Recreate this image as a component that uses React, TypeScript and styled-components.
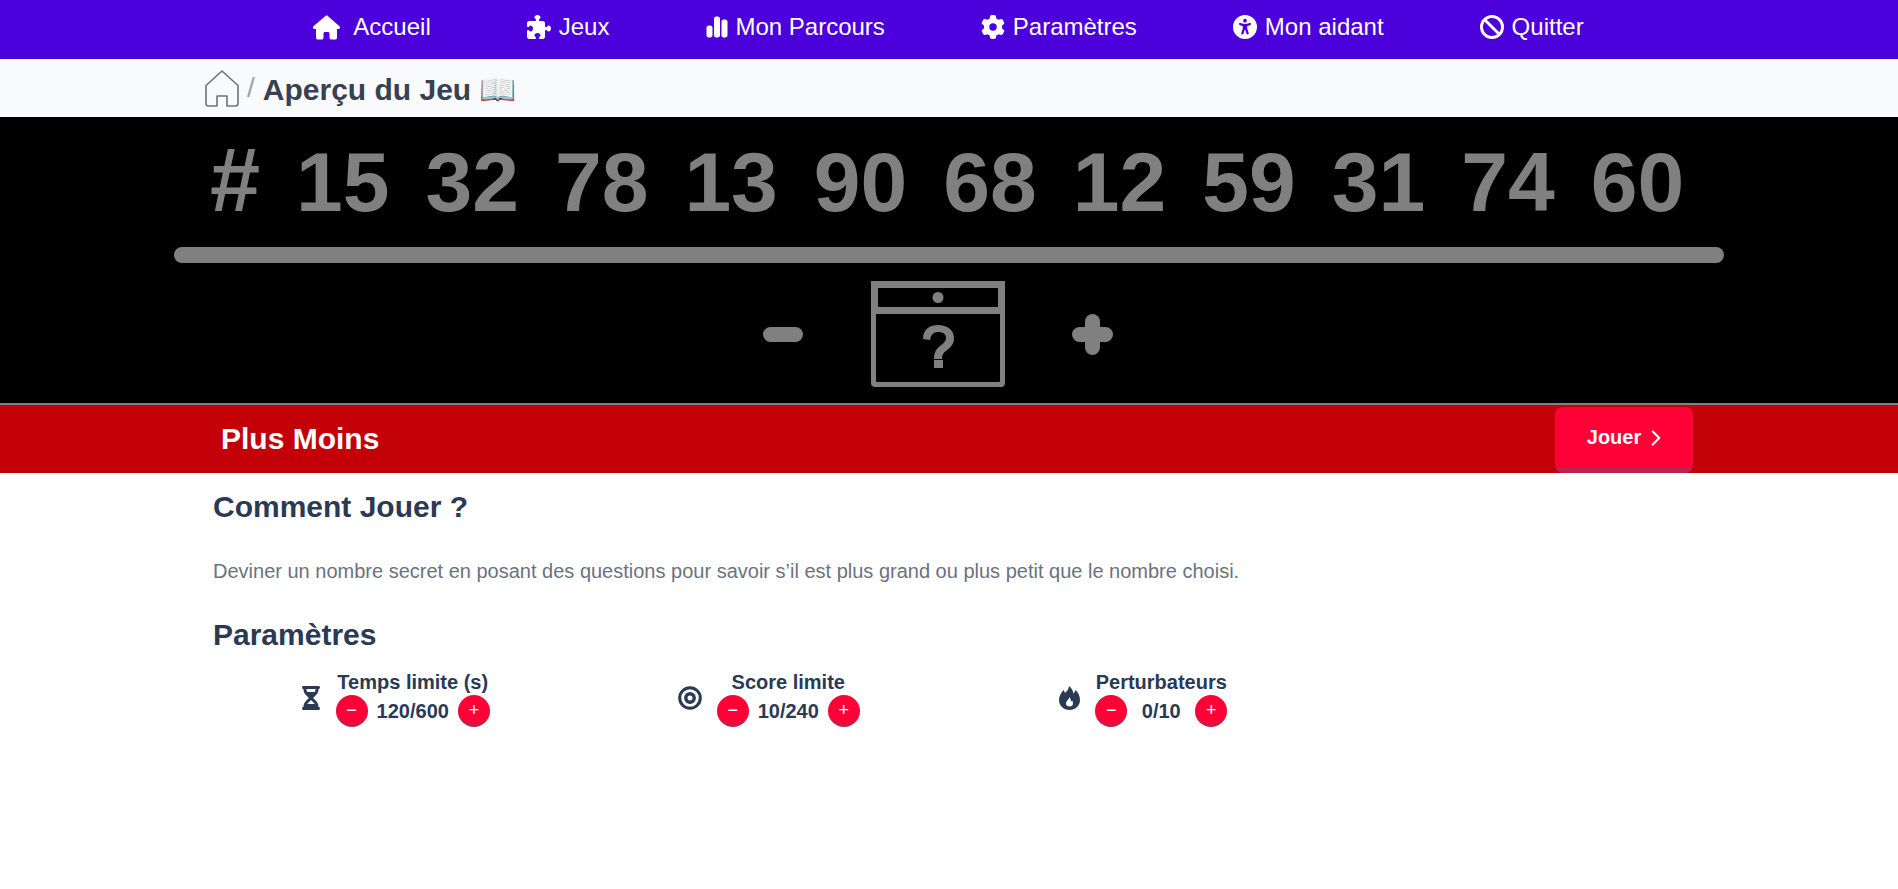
import React from "react";
import styled, { createGlobalStyle } from "styled-components";
import {
  FaBan,
  FaChartSimple,
  FaGear,
  FaHouse,
  FaHourglassHalf,
  FaPuzzlePiece,
  FaUniversalAccess,
} from "react-icons/fa6";
import { LuChevronRight } from "react-icons/lu";

const GlobalStyle = createGlobalStyle`
  * {
    box-sizing: border-box;
  }

  body {
    margin: 0;
    background: #ffffff;
    font-family: "Liberation Sans", Arial, sans-serif;
  }
`;

const Nav = styled.nav`
  display: flex;
  justify-content: center;
  gap: 96px;
  height: 59px;
  padding: 15px 1px 0 0;
  background: #4c00dc;
`;

const NavItem = styled.a<{ $gap?: number }>`
  display: flex;
  align-items: center;
  gap: ${(p) => p.$gap ?? 8}px;
  height: 24px;
  color: #ffffff;
  font-size: 24px;
  line-height: 24px;
`;

const Breadcrumb = styled.div`
  display: flex;
  align-items: center;
  height: 58px;
  padding-left: 205px;
  background: #f9fafb;
`;

const Slash = styled.span`
  margin: 0 8px;
  color: #9ca3af;
  font-size: 28px;
`;

const PageTitle = styled.h1`
  margin: 2px 0 0;
  color: #374151;
  font-size: 30px;
  font-weight: 700;
`;

const Preview = styled.section`
  display: flex;
  flex-direction: column;
  align-items: center;
  height: 288px;
  padding-top: 13px;
  background: #000000;
  border-bottom: 2px solid #808080;
  color: #808080;
`;

const Numbers = styled.div`
  height: 100px;
  padding-right: 4px;
  font-size: 84px;
  font-weight: 700;
  line-height: 100px;
  white-space: pre;
  word-spacing: 12.7px;
`;

const Hash = styled.span`
  font-size: 90px;
`;

const Bar = styled.div`
  width: 1550px;
  height: 16px;
  margin-top: 17px;
  border-radius: 8px;
  background: #808080;
`;

const Controls = styled.div`
  display: flex;
  align-items: center;
  margin-top: 18px;
  padding-right: 22px;
`;

const Hero = styled.div`
  display: flex;
  align-items: center;
  justify-content: space-between;
  height: 68px;
  padding: 0 205px 0 221px;
  background: #c30007;
`;

const HeroTitle = styled.h2`
  margin: 0;
  color: #ffffff;
  font-size: 30px;
  font-weight: 700;
`;

const PlayButton = styled.button`
  display: flex;
  align-items: center;
  justify-content: center;
  gap: 2px;
  width: 138px;
  height: 66px;
  margin-top: 2px;
  padding: 0 0 0 8px;
  border: 0;
  border-bottom: 5px solid #b9234e;
  border-radius: 8px;
  background: #ff0037;
  color: #ffffff;
  font-family: inherit;
  font-size: 20px;
  font-weight: 700;
`;

const Content = styled.main`
  padding: 16px 213px 0;
`;

const Heading = styled.h2`
  margin: 0;
  color: #2a3a55;
  font-size: 30px;
  font-weight: 700;
  line-height: 36px;
`;

const Description = styled.p`
  margin: 32px 0 32px;
  color: #6b7280;
  font-size: 20px;
  line-height: 28px;
`;

const SettingsGrid = styled.div`
  display: grid;
  grid-template-columns: repeat(4, 374.5px);
  margin: 16px 0 0 -6px;
`;

const Setting = styled.div<{ $gap: number }>`
  display: flex;
  align-items: center;
  justify-content: center;
  gap: ${(p) => p.$gap}px;
  color: #2a3a55;
`;

const SettingBody = styled.div`
  display: flex;
  flex-direction: column;
  align-items: center;
`;

const SettingLabel = styled.div`
  font-size: 20px;
  font-weight: 700;
  line-height: 26px;
`;

const Stepper = styled.div`
  display: flex;
  align-items: center;
`;

const StepButton = styled.button`
  display: flex;
  align-items: center;
  justify-content: center;
  width: 32px;
  height: 32px;
  padding: 2px 0 0;
  border: 0;
  border-bottom: 3px solid #b9234e;
  border-radius: 50%;
  background: #ff0037;
  color: #ffffff;
  font-family: inherit;
  font-size: 18px;
`;

const StepValue = styled.span`
  min-width: 50px;
  margin: 0 9px;
  font-size: 20px;
  font-weight: 700;
  text-align: center;
`;

const HomeOutline = () => (
  <svg width="34" height="37" viewBox="0 0 34 37" fill="none" stroke="#6b7280" strokeWidth="1.6" strokeLinejoin="round">
    <path d="M17 1 L33 15.5 V33.5 Q33 36 30.5 36 H22 V26 H12 V36 H3.5 Q1 36 1 33.5 V15.5 Z" />
  </svg>
);

const MinusShape = () => (
  <svg width="40" height="15" viewBox="0 0 40 15">
    <rect width="40" height="15" rx="7.5" fill="#808080" />
  </svg>
);

const PlusShape = () => (
  <svg width="41" height="41" viewBox="0 0 41 41">
    <rect y="13" width="41" height="15" rx="7.5" fill="#808080" />
    <rect x="13" width="15" height="41" rx="7.5" fill="#808080" />
  </svg>
);

const MysteryBox = () => (
  <svg width="134" height="106" viewBox="0 0 134 106" style={{ margin: "0 67px 0 68px" }}>
    <path
      fill="#808080"
      fillRule="evenodd"
      d="M0 0 H134 V102 Q134 106 130 106 H4 Q0 106 0 102 Z M7 7 V26 H127 V7 Z M5 33 V100 Q5 101 6 101 H128 Q129 101 129 100 V33 Z"
    />
    <circle cx="67" cy="16.5" r="5.5" fill="#808080" />
    <path
      fill="#808080"
      d="M52 58 C52 48 59 44 67 44 C76 44 83 49 83 57 C83 63 80 66 75 70 C72 72 71 74 71 78 H63 C63 73 64 69 69 65 C73 62 75 60 75 57 C75 53 72 51 67 51 C63 51 60 53 59 59 Z M63 79 H72 V87 H63 Z"
    />
  </svg>
);

const TargetRings = () => (
  <svg width="24" height="24" viewBox="0 0 24 24" fill="none" stroke="currentColor">
    <circle cx="12" cy="12" r="10.3" strokeWidth="3" />
    <circle cx="12" cy="12" r="4.2" strokeWidth="3.4" />
  </svg>
);

const FlameIcon = () => (
  <svg width="21" height="24" viewBox="0 0 21 24">
    <path
      fill="currentColor"
      fillRule="evenodd"
      d="M10 0 C10 3 8 5 6 7 C5.5 5.5 5 4.5 4.5 4 C2 7 0 10 0 14 C0 20 5 24 10.5 24 C16 24 21 20 21 14 C21 10 19 6 16.5 4 C16 5.5 15.5 6.5 14.5 7.5 C14 4.5 12.5 2 10 0 Z M10.5 11 C10.5 13 7 15 7 17.5 C7 19.5 8.5 20.5 10.5 20.5 C12.5 20.5 14 19.5 14 17.5 C14 16 13.5 15 13 14.5 C12.5 15.2 12 15.5 11.7 15.5 C12 14 11.5 12 10.5 11 Z"
    />
  </svg>
);

const navItems = [
  { label: "Accueil", icon: <FaHouse size={27} />, gap: 13 },
  { label: "Jeux", icon: <FaPuzzlePiece size={24} /> },
  { label: "Mon Parcours", icon: <FaChartSimple size={24} />, gap: 6 },
  { label: "Paramètres", icon: <FaGear size={24} /> },
  { label: "Mon aidant", icon: <FaUniversalAccess size={24} /> },
  { label: "Quitter", icon: <FaBan size={24} /> },
];

const settings = [
  { label: "Temps limite (s)", value: "120/600", gap: 13, icon: <FaHourglassHalf size={24} /> },
  { label: "Score limite", value: "10/240", gap: 15, icon: <TargetRings /> },
  { label: "Perturbateurs", value: "0/10", gap: 15, icon: <FlameIcon /> },
];

const App: React.FC = () => {
  return (
    <>
      <GlobalStyle />
      <Nav>
        {navItems.map((item) => (
          <NavItem key={item.label} $gap={item.gap}>
            {item.icon}
            {item.label}
          </NavItem>
        ))}
      </Nav>
      <Breadcrumb>
        <HomeOutline />
        <Slash>/</Slash>
        <PageTitle>Aperçu du Jeu 📖</PageTitle>
      </Breadcrumb>
      <Preview>
        <Numbers>
          <Hash>#</Hash> 15 32 78 13 90 68 12 59 31 74 60
        </Numbers>
        <Bar />
        <Controls>
          <MinusShape />
          <MysteryBox />
          <PlusShape />
        </Controls>
      </Preview>
      <Hero>
        <HeroTitle>Plus Moins</HeroTitle>
        <PlayButton>
          Jouer
          <LuChevronRight size={26} />
        </PlayButton>
      </Hero>
      <Content>
        <Heading>Comment Jouer ?</Heading>
        <Description>
          Deviner un nombre secret en posant des questions pour savoir s’il est plus grand ou plus petit que le nombre choisi.
        </Description>
        <Heading>Paramètres</Heading>
        <SettingsGrid>
          {settings.map((setting) => (
            <Setting key={setting.label} $gap={setting.gap}>
              {setting.icon}
              <SettingBody>
                <SettingLabel>{setting.label}</SettingLabel>
                <Stepper>
                  <StepButton>−</StepButton>
                  <StepValue>{setting.value}</StepValue>
                  <StepButton>+</StepButton>
                </Stepper>
              </SettingBody>
            </Setting>
          ))}
        </SettingsGrid>
      </Content>
    </>
  );
};

export default App;
